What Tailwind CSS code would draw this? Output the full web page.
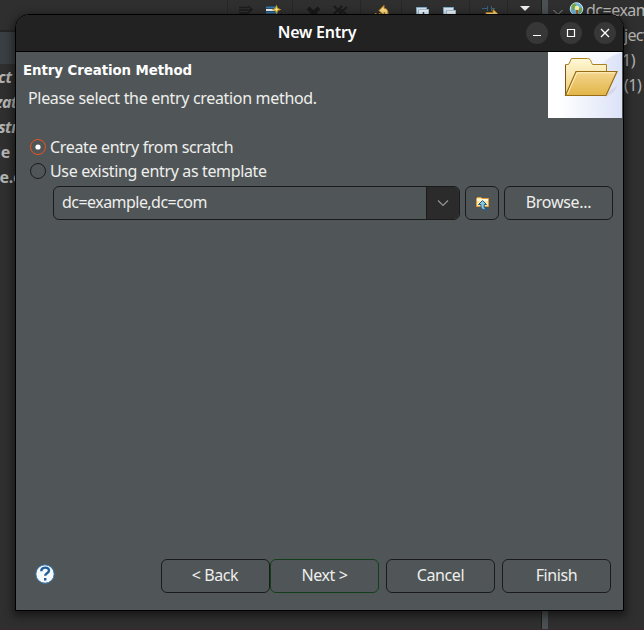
<!DOCTYPE html>
<html lang="en">
<head>
<meta charset="utf-8">
<title>New Entry</title>
<script src="https://cdn.jsdelivr.net/npm/@tailwindcss/browser@4"></script>
</head>
<body class="relative h-[630px] w-[644px] overflow-hidden bg-[#2f2f2f] font-['Noto_Sans',sans-serif] text-base text-[#eeeeec]">

<!-- Main window behind the dialog -->
<div class="flex h-full border-b border-[#3a2a30] text-[#b4b4b2]">
  <div class="flex w-[541px] flex-col">
    <div class="h-[30px] shrink-0">
      <svg width="541" height="30" viewBox="0 0 541 30" fill="none">
        <path d="M227.500 0v14M292.500 0v14M360.500 0v14M401.500 0v14M469.500 0v14M507.500 0v14" stroke="#272727"/>
        <path d="M239 7.500h9M239 10h12M239 13h10M248 6l4 3.500-4 3.500" stroke="#1c1c1c" stroke-width="1.500"/>
        <path d="M266 7.500h10M266 12.500h12" stroke="#2e77ab" stroke-width="2"/>
        <path d="M266 10h10" stroke="#e9f3fa" stroke-width="2"/>
        <path d="M276.500 5.500l1 3 3 1-3 1-1 3-1-3-3-1 3-1z" fill="#fff3a0" stroke="#d19a16"/>
        <path d="M308 8l10 9M319 8l-10 9" stroke="#191919" stroke-width="4"/>
        <path d="M334 6l8 8M342 6l-8 8M339 8l8 7M347 7l-8 7" stroke="#1b1b1b" stroke-width="2"/>
        <path d="M379 10.500l5-5v3c4 0 4 3 4 7h-3c0-3 0-3-1-3v3z" fill="#ffdf88" stroke="#c98a16"/>
        <path d="M375 14h1.500M379 14h1.500" stroke="#d9951a" stroke-width="2"/>
        <path d="M416.500 7.500h10v9h-10z" fill="#d7e7f2" stroke="#83abc4"/>
        <path d="M418.500 9.500h10v9h-10z" fill="#f3fafd" stroke="#a5c4d8"/>
        <path d="M423.500 12v4" stroke="#174f80" stroke-width="1.500"/>
        <path d="M443.500 7.500h10v9h-10z" fill="#d7e7f2" stroke="#83abc4"/>
        <path d="M446.500 10.500h9v6h-9z" fill="#f3fafd" stroke="#a5c4d8"/>
        <path d="M482 8.500h5M487.500 6v5M491.500 6v5M492 8.500h3" stroke="#34617f"/>
        <path d="M486 12.500h7V9.500l5 4.500-5 4v-3h-7z" fill="#ffe083" stroke="#c88612"/>
        <path d="M520 6h10l-5 5z" fill="#eee"/>
      </svg>
    </div>
    <div class="h-[34px] shrink-0 border-t-2 border-[#252525] bg-[#393f42]"></div>
    <div class="flex w-4 flex-col items-start overflow-hidden pt-px text-base leading-[25px] font-bold whitespace-nowrap">
      <div class="-ml-[2px] italic tracking-[-0.3px]">ct</div>
      <div class="-ml-[5px] italic tracking-[-0.5px]">zati</div>
      <div class="-ml-[2px] italic tracking-[-0.5px]">stru</div>
      <div class="-ml-[4px]">le</div>
      <div class="-ml-[5px] tracking-[-0.3px]">le.c</div>
    </div>
  </div>
  <div class="w-[7px] shrink-0 border-l border-[#1d1d1d] bg-[#4b5153]"></div>
  <div class="relative grow overflow-hidden text-base leading-[25px] tracking-[-0.5px] whitespace-nowrap">
    <div class="-mt-[2px] flex h-[25px] items-center">
      <svg class="ml-1 shrink-0" width="34" height="24" viewBox="0 0 34 24" fill="none">
        <path d="M1.500 11l4.500 4.500 4.500-4.500" stroke="#999"/>
        <circle cx="24.500" cy="10" r="6.300" fill="#6fb8de" stroke="#dbe8ee"/>
        <path d="M20 6c3-3 5-1 4 1s-2 2-2 4-3-1-2-5zM26 8l4 1c0 4-2 5-3 6z" fill="#73a84c"/>
        <circle cx="25" cy="9" r="2.300" fill="#fff1a3"/><path d="M24 11h2v4h-2z" fill="#a96022"/>
      </svg>
      <span>dc=example</span>
    </div>
    <div class="pl-[76px] tracking-[-0.7px]">ject</div>
    <div class="pl-[74px]">1)</div>
    <div class="pl-[76px]">(1)</div>
  </div>
</div>

<!-- Dialog -->
<main class="absolute top-[14px] left-[15px] flex h-[597px] w-[609px] flex-col overflow-hidden rounded-t-[14px] border border-black bg-[#505658] shadow-[0_3px_9px_2px_rgba(0,0,0,0.5)]">
  <header class="grid h-[37px] shrink-0 grid-cols-[1fr_auto_1fr] items-center border-b border-black bg-[#222222]">
    <span></span>
    <h1 class="-ml-[5px] pb-0.5 text-base font-semibold tracking-[-0.2px] text-white">New Entry</h1>
    <div class="flex justify-end gap-3 pr-[7px]">
      <button class="size-[22px] rounded-full bg-[#373737]"><svg width="22" height="22" fill="none"><path d="M7 13.500h8" stroke="#fff"/></svg></button>
      <button class="size-[22px] rounded-full bg-[#373737]"><svg width="22" height="22" fill="none"><path d="M7.500 7.500h7v7h-7z" stroke="#fff" stroke-width="1.200"/></svg></button>
      <button class="size-[22px] rounded-full bg-[#373737]"><svg width="22" height="22" fill="none"><path d="M7 7l8 8M15 7l-8 8" stroke="#fff" stroke-width="1.300"/></svg></button>
    </div>
  </header>

  <section class="flex h-[66px] shrink-0 justify-between">
    <div class="pl-[7px]">
      <h2 class="mt-[9px] font-['DejaVu_Sans',sans-serif] text-[13.330px] leading-5 font-bold tracking-[-0.060px] text-white">Entry Creation Method</h2>
      <p class="mt-[5px] pl-[5px] leading-6 tracking-[-0.320px]">Please select the entry creation method.</p>
    </div>
    <svg class="mr-px" width="74" height="66" viewBox="0 0 74 66" fill="none">
      <defs>
        <linearGradient id="sky" x1="0" x2="1"><stop offset=".15" stop-color="#fff"/><stop offset="1" stop-color="#dbe2f7"/></linearGradient>
        <linearGradient id="back" x1="0" x2="0" y1="0" y2="1"><stop stop-color="#fff9d8"/><stop offset="1" stop-color="#edcd77"/></linearGradient>
        <linearGradient id="front" x1="0" x2="0" y1="0" y2="1"><stop stop-color="#f4d58e"/><stop offset="1" stop-color="#e2b548"/></linearGradient>
        <linearGradient id="glow" x1="0" x2="0" y1="0" y2="1"><stop stop-color="#fff" stop-opacity=".75"/><stop offset="1" stop-color="#fff" stop-opacity="0"/></linearGradient>
      </defs>
      <path d="M0 0h75v66H0z" fill="url(#sky)"/>
      <path d="M0 0h75C61 3 52 12 44 26L0 40z" fill="url(#glow)"/>
      <path d="M57 42l13-9-5 8-8 4z" fill="#b9aec9" opacity=".3"/>
      <path d="M17.500 43V12.500h3l3-6h16c2 0 3 1 4 4l1 2h14V42z" fill="url(#back)" stroke="#a9821f"/>
      <path d="M21 12.500h23" stroke="#fff3c4"/>
      <path d="M17.500 43V13" stroke="#815117"/>
      <path d="M17.500 43.500L28 19.500h41L58 43.500z" fill="url(#front)" stroke="#976d16" stroke-width="1.200"/>
      <path d="M19.500 42L29 20.800H67" stroke="#fff1be"/>
    </svg>
  </section>

  <form class="flex grow flex-col tracking-[-0.4px]">
    <label class="mt-[17px] ml-[14px] flex h-6 items-center gap-1">
      <svg class="shrink-0" width="16" height="16" fill="none"><circle cx="8" cy="8" r="7.500" stroke="#e95420"/><circle cx="8" cy="8" r="2.600" fill="#fff"/></svg>
      <span class="leading-6 tracking-[-0.33px]">Create entry from scratch</span>
    </label>
    <label class="ml-[14px] flex h-6 items-center gap-1">
      <svg class="shrink-0" width="16" height="16" fill="none"><circle cx="8" cy="8" r="7.500" stroke="#1c1c1c"/></svg>
      <span class="leading-6 tracking-[-0.35px]">Use existing entry as template</span>
    </label>
    <div class="mt-[3px] ml-[37px] flex h-[34px] shrink-0">
      <div class="flex w-[407px] overflow-hidden rounded-md border border-[#1b1b1b]">
        <span class="grow pl-2 leading-[31px] tracking-[-0.54px]">dc=example,dc=com</span>
        <span class="flex w-[33px] items-center justify-center border-l border-[#1b1b1b] bg-[#2b2b2b]"><svg width="12" height="8" fill="none"><path d="M1 1.500l5 5 5-5" stroke="#949494" stroke-width="1.200"/></svg></span>
      </div>
      <button type="button" class="ml-[5px] flex w-[34px] items-center justify-center rounded-md border border-[#1b1b1b]">
        <svg width="16" height="16" viewBox="0 0 16 16" fill="none">
          <path d="M2.500 11.500v-8l1-1h3.500l1 1h6.500v8z" fill="#ffe7a5" stroke="#e39b37"/>
          <path d="M3 5h11" stroke="#fff8df" stroke-width="2"/>
          <path d="M8.500 5.500l4 4h-2.300v2.500c0 1.500 1 2 3.300 2-3 1.500-6.500.5-6.500-2.500v-2H4.500z" fill="#8bc9e3" stroke="#205984"/>
        </svg>
      </button>
      <button type="button" class="ml-[5px] w-[109px] rounded-md border border-[#1b1b1b] pb-0.5 tracking-[-0.3px]">Browse...</button>
    </div>

    <footer class="mt-auto mb-[17px] flex h-[34px] items-center pl-[19px]">
      <svg class="mb-1 shrink-0" width="20" height="20" fill="none">
        <circle cx="10" cy="10" r="9.200" fill="#f5f9fc" stroke="#2f70a8"/>
        <path d="M6.300 7.300c0-4.800 7.700-4.800 7.700-.8 0 2.700-3.800 2.700-3.800 5.200M10.200 14v2.400" stroke="#205d99" stroke-width="2.400"/>
      </svg>
      <div class="ml-[106px] flex h-full">
        <button type="button" class="w-[109px] rounded-md border border-[#1b1b1b] pr-px pb-0.5">&lt; Back</button>
        <button type="button" class="w-[109px] rounded-md border border-[#123f17] pb-0.5">Next &gt;</button>
        <button type="button" class="ml-[7px] w-[109px] rounded-md border border-[#1b1b1b] pb-0.5">Cancel</button>
        <button type="button" class="ml-[7px] w-[109px] rounded-md border border-[#1b1b1b] pb-0.5">Finish</button>
      </div>
    </footer>
  </form>
</main>
</body>
</html>
